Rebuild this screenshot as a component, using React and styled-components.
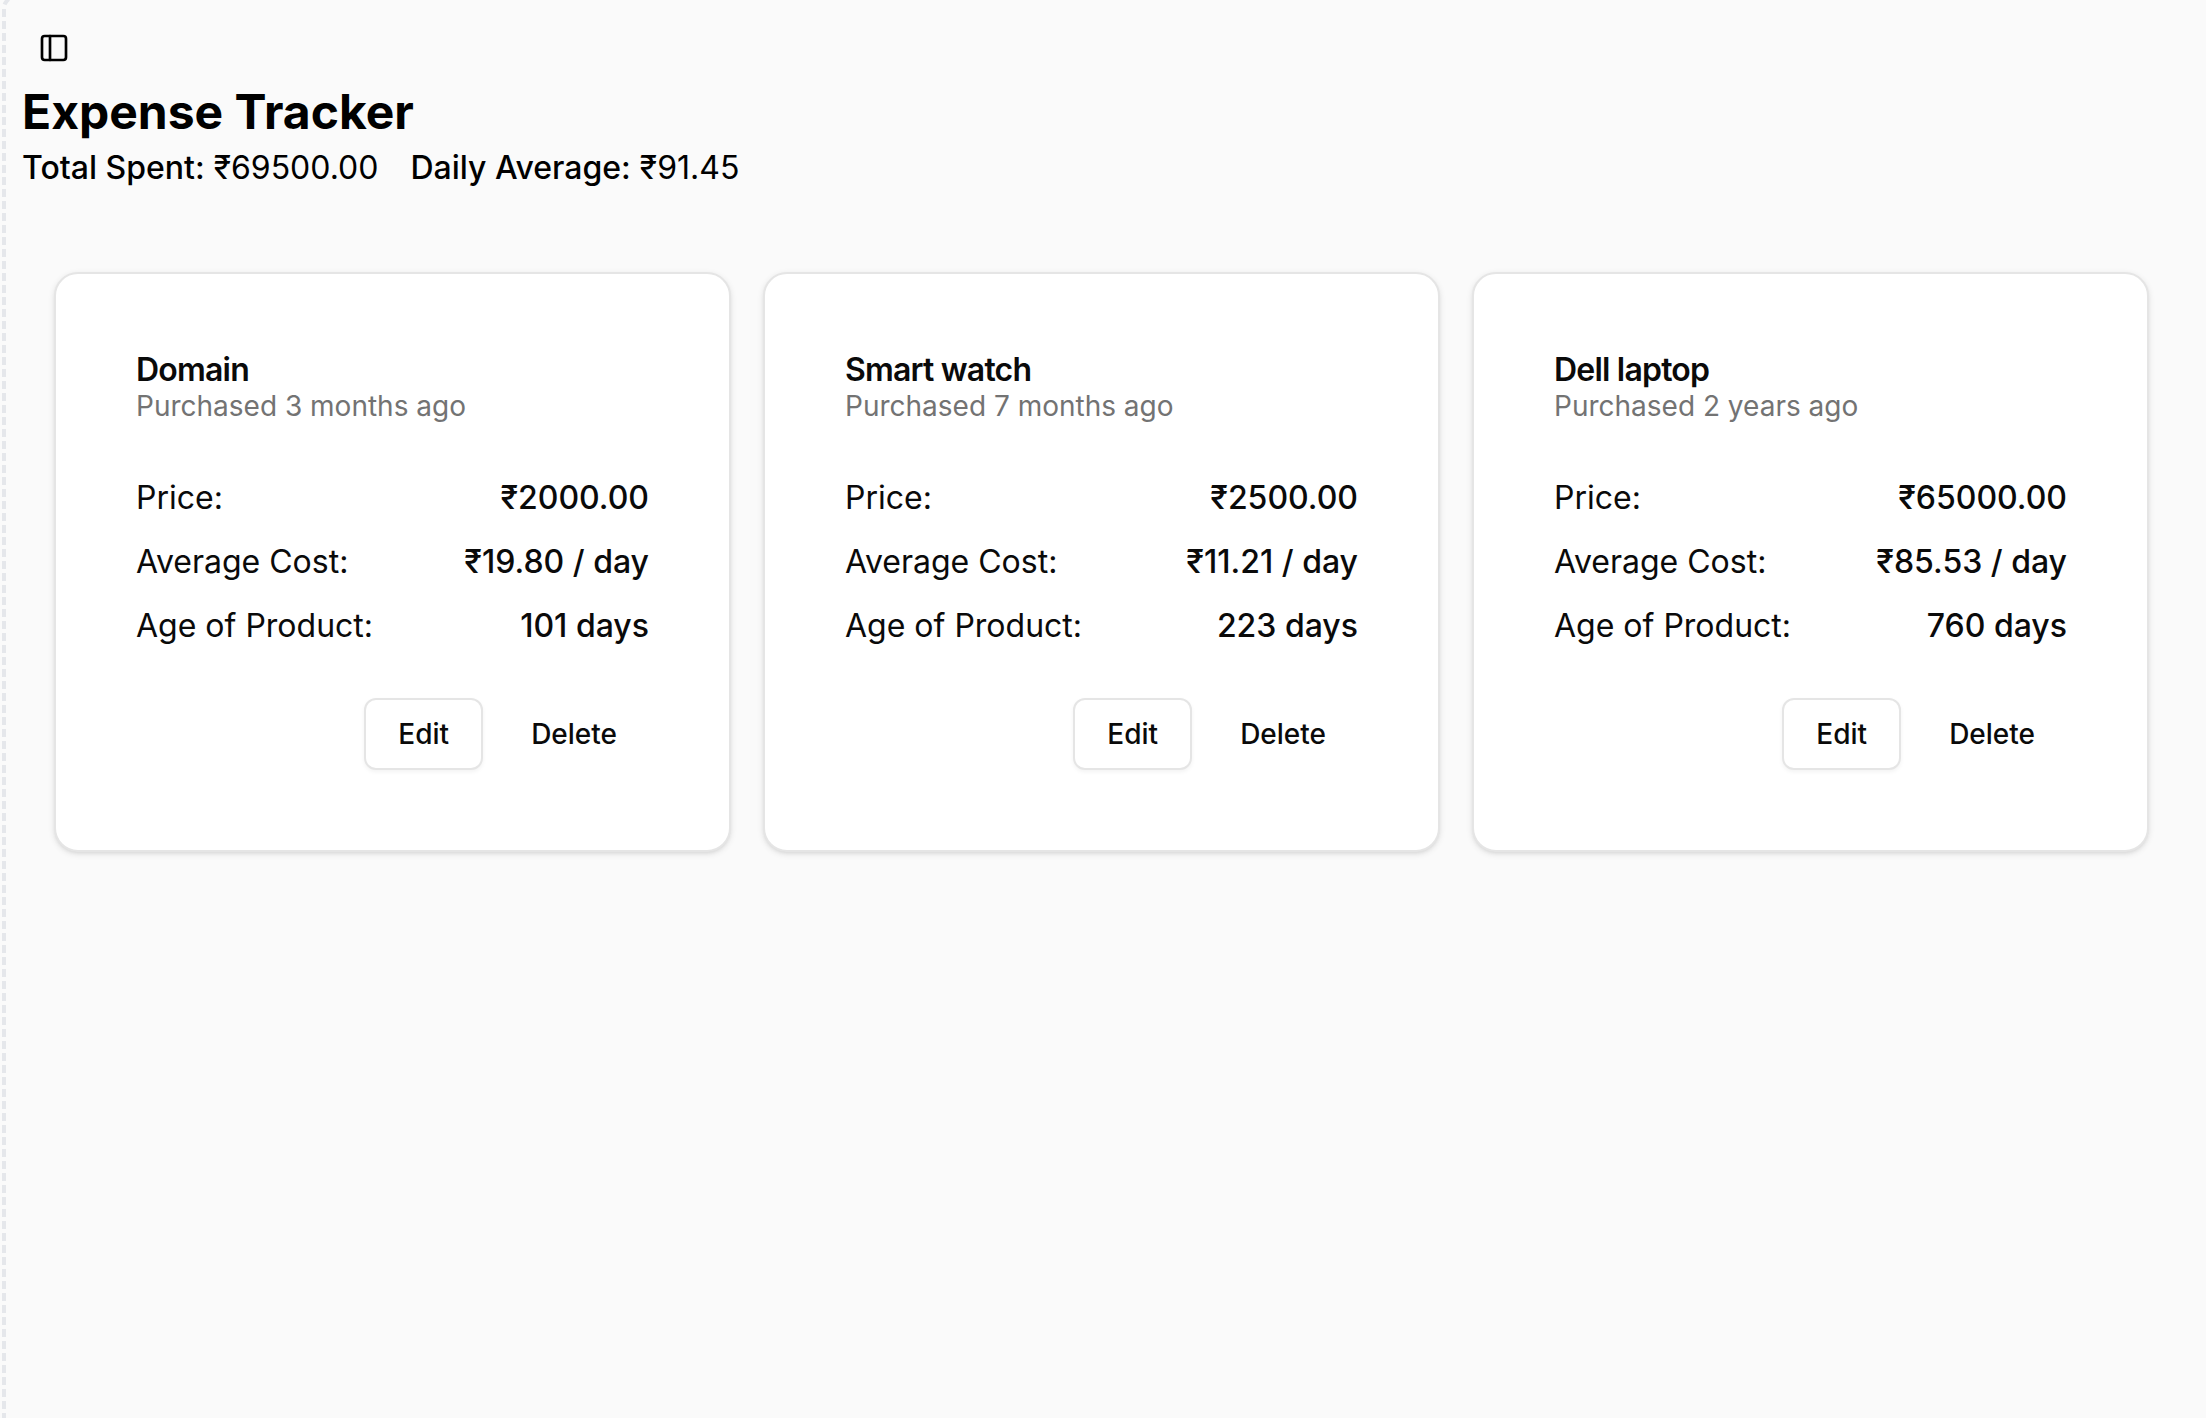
import React from "react";
import styled, { createGlobalStyle } from "styled-components";
import { PanelLeft } from "lucide-react";

const GlobalStyle = createGlobalStyle`
  *, *::before, *::after { box-sizing: border-box; }
  body {
    margin: 0;
    background: #fafafa;
    color: #0a0a0a;
    font-family: Inter, "Noto Sans", sans-serif;
    -webkit-font-smoothing: antialiased;
  }
  h1, h2, p, dl, dd { margin: 0; }
`;

const Shell = styled.div`
  display: flex;
  min-height: 100vh;
  padding-left: 2px;
`;

const Rail = styled.div`
  display: flex;
  flex-direction: column;
  width: 20px;
  flex: none;
`;

const RailCorner = styled.svg`
  display: block;
  width: 10px;
  height: 9px;
`;

const RailLine = styled.div`
  flex: 1;
  width: 4px;
  background: repeating-linear-gradient(#e5e7eb 0 8px, transparent 8px 12px);
`;

const Main = styled.main`
  flex: 1;
  min-width: 0;
  padding: 20px 25px 32px 0;
`;

const IconButton = styled.button`
  display: flex;
  align-items: center;
  justify-content: center;
  width: 64px;
  height: 56px;
  padding: 0;
  border: 0;
  border-radius: 12px;
  background: transparent;
  color: #000;
  cursor: pointer;
`;

const PageTitle = styled.h1`
  color: #000;
  font-size: 48px;
  font-weight: 700;
  line-height: 64px;
  margin-top: 4px;
`;

const Summary = styled.div`
  display: flex;
  flex-wrap: wrap;
  gap: 32px;
  color: #000;
  font-size: 32px;
  line-height: 48px;
`;

const SummaryLabel = styled.span`
  font-weight: 500;
`;

const CardGrid = styled.section`
  display: grid;
  grid-template-columns: repeat(3, minmax(0, 1fr));
  gap: 32px;
  padding: 80px 32px 32px;
`;

const Card = styled.article`
  padding: 80px;
  border: 2px solid #e5e5e5;
  border-radius: 24px;
  background: #fff;
  box-shadow: 0 2px 6px rgba(0, 0, 0, 0.1), 0 2px 4px -2px rgba(0, 0, 0, 0.1);
`;

const CardTitle = styled.h2`
  font-size: 32px;
  font-weight: 600;
  line-height: 32px;
  letter-spacing: -0.025em;
`;

const CardNote = styled.p`
  color: #737373;
  font-size: 28px;
  line-height: 40px;
`;

const Facts = styled.dl`
  display: grid;
  gap: 16px;
  padding: 48px 0;
`;

const Fact = styled.div`
  display: flex;
  justify-content: space-between;
  font-size: 32px;
  line-height: 48px;
`;

const FactValue = styled.dd`
  font-weight: 500;
`;

const Actions = styled.div`
  display: flex;
  justify-content: flex-end;
  gap: 16px;
`;

const Button = styled.button`
  height: 72px;
  padding: 0 32px;
  border: ${(p) => (p.$outlined ? "2px solid #e5e5e5" : "0")};
  border-radius: 12px;
  background: ${(p) => (p.$outlined ? "#fff" : "transparent")};
  box-shadow: ${(p) => (p.$outlined ? "0 2px 4px rgba(0, 0, 0, 0.05)" : "none")};
  color: #0a0a0a;
  font-family: inherit;
  font-size: 28px;
  font-weight: 500;
  line-height: 40px;
  cursor: pointer;
`;

const expenses = [
  { name: "Domain", bought: "3 months ago", price: "₹2000.00", perDay: "₹19.80", days: 101 },
  { name: "Smart watch", bought: "7 months ago", price: "₹2500.00", perDay: "₹11.21", days: 223 },
  { name: "Dell laptop", bought: "2 years ago", price: "₹65000.00", perDay: "₹85.53", days: 760 },
];

function ExpenseCard({ item }) {
  const facts = [
    ["Price:", item.price],
    ["Average Cost:", `${item.perDay} / day`],
    ["Age of Product:", `${item.days} days`],
  ];
  return (
    <Card>
      <CardTitle>{item.name}</CardTitle>
      <CardNote>Purchased {item.bought}</CardNote>
      <Facts>
        {facts.map(([label, value]) => (
          <Fact key={label}>
            <dt>{label}</dt>
            <FactValue>{value}</FactValue>
          </Fact>
        ))}
      </Facts>
      <Actions>
        <Button type="button" $outlined>Edit</Button>
        <Button type="button">Delete</Button>
      </Actions>
    </Card>
  );
}

export default function App() {
  return (
    <>
      <GlobalStyle />
      <Shell>
        <Rail aria-hidden="true">
          <RailCorner viewBox="0 0 10 9">
            <path d="M2.6 4.5 Q3.5 2 6.5 -1" fill="none" stroke="#e5e7eb" strokeWidth="4" />
          </RailCorner>
          <RailLine />
        </Rail>
        <Main>
          <IconButton type="button" aria-label="Toggle sidebar">
            <PanelLeft size={32} aria-hidden="true" />
          </IconButton>
          <PageTitle>Expense Tracker</PageTitle>
          <Summary>
            <span><SummaryLabel>Total Spent:</SummaryLabel> ₹69500.00</span>
            <span><SummaryLabel>Daily Average:</SummaryLabel> ₹91.45</span>
          </Summary>
          <CardGrid aria-label="Expenses">
            {expenses.map((item) => (
              <ExpenseCard key={item.name} item={item} />
            ))}
          </CardGrid>
        </Main>
      </Shell>
    </>
  );
}
